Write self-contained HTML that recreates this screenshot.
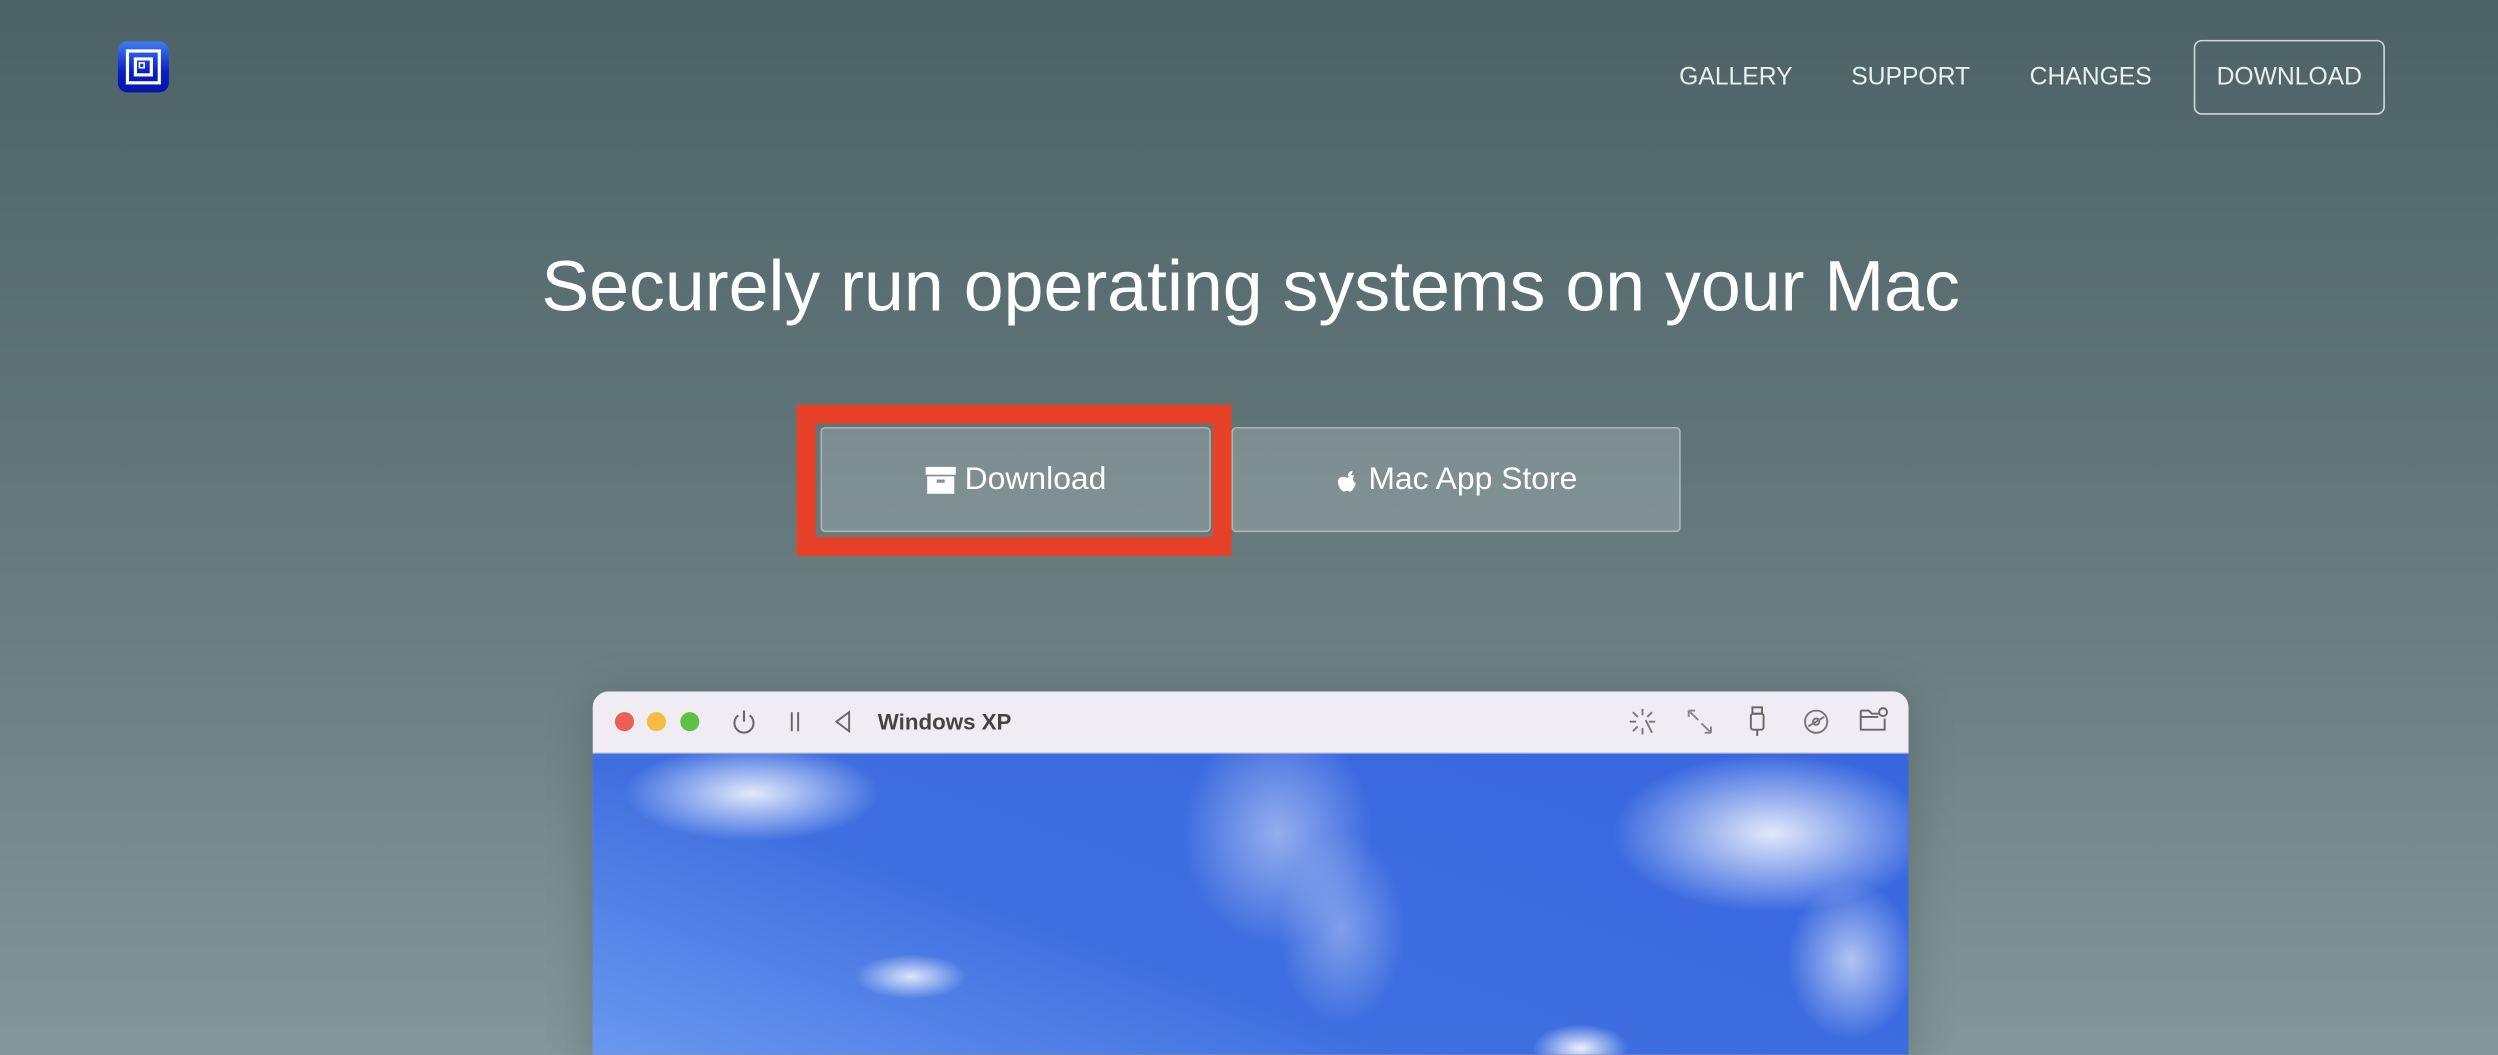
<!DOCTYPE html>
<html><head><meta charset="utf-8"><style>
html,body{margin:0;padding:0;width:2498px;height:1054px;overflow:hidden;background:#839798;}
#s{position:absolute;left:0;top:0;width:1568px;height:662px;overflow:hidden;transform:scale(1.59311);transform-origin:0 0;background:linear-gradient(#4c6266,#6a7e81 60%,#839798);font-family:"Liberation Sans",sans-serif;}
.a{position:absolute;}
.nav{color:#e9eeee;font-size:15.5px;top:40px;}
.btn{position:absolute;top:268px;height:66px;border:1px solid rgba(255,255,255,.35);border-radius:3px;background:rgba(255,255,255,.18);color:#fff;font-size:20px;display:flex;align-items:center;justify-content:center;box-sizing:border-box;}
.tl{position:absolute;top:13px;width:12px;height:12px;border-radius:50%;}
</style></head><body><div id="s">
<div class="a" style="left:74px;top:26px;width:32px;height:32px;border-radius:6px;background:linear-gradient(#3f7df0,#0a1fc4 60%,#0015a8);">
 <div class="a" style="left:5px;top:5px;width:18px;height:18px;border:2px solid #fff;"></div>
 <div class="a" style="left:10px;top:10px;width:8px;height:8px;border:2px solid #fff;"></div>
 <div class="a" style="left:13px;top:13px;width:2px;height:2px;border:1px solid #fff;"></div>
</div>
<div class="a nav" style="left:1054px">GALLERY</div>
<div class="a nav" style="left:1162px">SUPPORT</div>
<div class="a nav" style="left:1274px">CHANGES</div>
<div class="a nav" style="left:1377px;top:25px;width:118px;height:45px;border:1px solid rgba(255,255,255,.75);border-radius:5px;display:flex;align-items:center;justify-content:center;">DOWNLOAD</div>
<div class="a" style="left:0;width:1570px;top:154px;text-align:center;color:#fff;font-size:45px;">Securely run operating systems on your Mac</div>
<div class="a" style="left:500px;top:254px;width:249px;height:71px;border:12px solid #e8412a;"></div>
<div class="btn" style="left:515px;width:245px;"><svg width="19" height="17" viewBox="0 0 19 17" style="margin-right:6px"><rect x="0" y="0" width="19" height="5" fill="#fff"/><rect x="1" y="6" width="17" height="11" fill="#fff"/><rect x="7" y="8" width="5" height="2" fill="#7f9293"/></svg>Download</div>
<div class="btn" style="left:773px;width:282px;"><svg width="16" height="19" viewBox="0 0 16 19" style="margin-right:5px"><path d="M8 5C9 3 11 3 12 3.5 11 5 11 7 13 8.5 12 12 10 14 9 13.5 8 13 7 13 6 13.5 4 14 1 9 2 6 3 4 6 4 8 5Z M8 4C8 2 9.5 0.5 11 0.5 11 2 10 4 8 4Z" fill="#fff" transform="translate(0,3)"/></svg>Mac App Store</div>
<div class="a" style="left:372px;top:434px;width:826px;height:240px;border-radius:10px;overflow:hidden;box-shadow:0 4px 30px rgba(0,0,0,.2);">
 <div class="a" style="left:0;top:0;width:826px;height:38px;background:#efedf3;border-bottom:1px solid #d6d4da;"></div>
 <div class="tl" style="left:14px;background:#ec5f56"></div>
 <div class="tl" style="left:34px;background:#f4bd42"></div>
 <div class="tl" style="left:55px;background:#5fc144"></div>
 <svg class="a" style="left:86px;top:10px" width="18" height="18" viewBox="0 0 18 18" fill="none" stroke="#666" stroke-width="1.3"><path d="M5.5 5A6 6 0 1 0 12.5 5M9 2V9"/></svg>
 <svg class="a" style="left:122px;top:12px" width="10" height="14"><path d="M3 1V13M7 1V13" stroke="#666" stroke-width="1.2"/></svg>
 <svg class="a" style="left:151px;top:11px" width="12" height="16"><path d="M10 2L2 8 10 14Z" fill="none" stroke="#666" stroke-width="1.2"/></svg>
 <div class="a" style="left:179px;top:11px;font-size:14px;font-weight:bold;color:#444;">Windows XP</div>
 <svg class="a" style="left:650px;top:10px" width="18" height="18" fill="none" stroke="#777" stroke-width="1.2"><path d="M9 1V5M9 13V17M1 9H5M13 9H17M3 3L6 6M15 3L12 6M3 15L6 12M11 8L15 16"/></svg>
 <svg class="a" style="left:686px;top:10px" width="18" height="18" fill="none" stroke="#888" stroke-width="1.2"><path d="M2 2L8 8M2 2V6M2 2H6M16 16L10 10M16 16V12M16 16H12"/></svg>
 <svg class="a" style="left:724px;top:9px" width="14" height="20" fill="none" stroke="#666" stroke-width="1.2"><rect x="4" y="1" width="6" height="4"/><rect x="3" y="5" width="8" height="10" rx="1.5"/><path d="M7 15V19"/></svg>
 <svg class="a" style="left:759px;top:10px" width="18" height="18" fill="none" stroke="#777" stroke-width="1.2"><circle cx="9" cy="9" r="7"/><circle cx="9" cy="9" r="2"/><path d="M4 12L14 6"/></svg>
 <svg class="a" style="left:794px;top:9px" width="20" height="18" fill="none" stroke="#666" stroke-width="1.2"><path d="M2 3H7L9 5H14M2 3V15H17V8M2 7H13"/><circle cx="16" cy="4" r="2.5"/></svg>
 <div class="a" style="left:0;top:39px;width:826px;height:201px;background:
  radial-gradient(ellipse 80px 30px at 100px 25px,rgba(255,255,255,.85),transparent),
  radial-gradient(ellipse 60px 70px at 430px 50px,rgba(255,255,255,.45),transparent),
  radial-gradient(ellipse 40px 60px at 470px 110px,rgba(255,255,255,.35),transparent),
  radial-gradient(ellipse 100px 50px at 740px 50px,rgba(255,255,255,.85),transparent),
  radial-gradient(ellipse 40px 50px at 790px 130px,rgba(255,255,255,.6),transparent),
  radial-gradient(ellipse 35px 14px at 200px 140px,rgba(255,255,255,.8),transparent),
  radial-gradient(ellipse 30px 15px at 620px 185px,rgba(255,255,255,.9),transparent),
  linear-gradient(20deg,#6c9af0,#3f6fe0 40%,#3866df);"></div>
</div>
</div></body></html>
